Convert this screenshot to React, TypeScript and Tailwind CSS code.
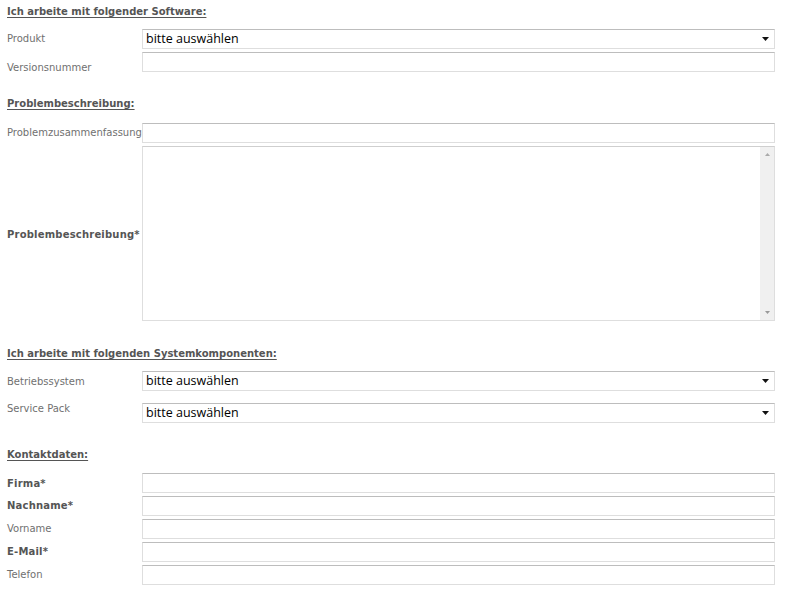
import React from "react";

// Support request form: product, problem, system and contact sections

const labelFont = "[font-family:'DejaVu_Sans',Verdana,sans-serif]";

function SectionTitle({ children, className = "" }: { children: React.ReactNode; className?: string }) {
    return (
        <div
            className={`pl-[7px] text-[10px] leading-[12px] font-bold text-[#555] underline underline-offset-2 ${labelFont} ${className}`}
        >
            {children}
        </div>
    );
}

function Label({ text, bold, pt }: { text: string; bold?: boolean; pt: string }) {
    return (
        <div
            className={`w-[142px] shrink-0 pl-[7px] text-[10px] leading-[12px] ${labelFont} ${pt} ${
                bold ? "font-bold tracking-[0.2px] text-[#555]" : "text-[#707070]"
            }`}
        >
            {text}
        </div>
    );
}

function TextBox() {
    return <div className="h-[20px] flex-1 border border-[#dedede] border-t-[#bdbdbd] bg-white" />;
}

function SelectBox() {
    return (
        <div className="flex h-[20px] flex-1 items-center justify-between border border-[#dedede] border-t-[#bdbdbd] bg-white pl-[3px] pr-[5px]">
            <span className="text-[12.5px] leading-none text-black [font-family:'Open_Sans',sans-serif]">
                bitte auswählen
            </span>
            <svg width="7" height="4" viewBox="0 0 7 4">
                <path d="M0 0h7L3.5 4z" fill="#111" />
            </svg>
        </div>
    );
}

function Row({ label, bold, select, pt }: { label: string; bold?: boolean; select?: boolean; pt: string }) {
    return (
        <div className="flex h-[20px] items-start">
            <Label text={label} bold={bold} pt={pt} />
            {select ? <SelectBox /> : <TextBox />}
        </div>
    );
}

export default function App() {
    return (
        <div className="min-h-[600px] w-[789px] bg-white pt-[6px] pr-[14px]">
            <SectionTitle>Ich arbeite mit folgender Software:</SectionTitle>
            <div className="mt-[11px] flex flex-col gap-[3px]">
                <Row label="Produkt" select pt="pt-[4px]" />
                <Row label="Versionsnummer" pt="pt-[10px]" />
            </div>

            <SectionTitle className="mt-[26px]">Problembeschreibung:</SectionTitle>
            <div className="mt-[13px] flex flex-col gap-[3px]">
                <Row label="Problemzusammenfassung" pt="pt-[4px]" />
                <div className="flex h-[175px] items-center">
                    <div
                        className={`w-[142px] shrink-0 pl-[7px] pt-[2px] text-[10px] leading-[12px] font-bold tracking-[0.2px] text-[#555] ${labelFont}`}
                    >
                        Problembeschreibung*
                    </div>
                    <div className="flex h-full flex-1 border border-[#dedede] border-t-[#cfcfcf] bg-white">
                        <div className="flex-1" />
                        <div className="flex w-[14px] flex-col items-center justify-between bg-[#f0f0f0] py-[6px]">
                            <svg width="5" height="3" viewBox="0 0 5 3">
                                <path d="M0 3h5L2.5 0z" fill="#aaa" />
                            </svg>
                            <svg width="5" height="3" viewBox="0 0 5 3">
                                <path d="M0 0h5L2.5 3z" fill="#999" />
                            </svg>
                        </div>
                    </div>
                </div>
            </div>

            <SectionTitle className="mt-[27px]">Ich arbeite mit folgenden Systemkomponenten:</SectionTitle>
            <div className="mt-[11px] flex flex-col gap-[12px]">
                <Row label="Betriebssystem" select pt="pt-[5px]" />
                <Row label="Service Pack" select pt="pt-0" />
            </div>

            <SectionTitle className="mt-[26px]">Kontaktdaten:</SectionTitle>
            <div className="mt-[12px] flex flex-col gap-[3px]">
                <Row label="Firma*" bold pt="pt-[5px]" />
                <Row label="Nachname*" bold pt="pt-[4px]" />
                <Row label="Vorname" pt="pt-[4px]" />
                <Row label="E-Mail*" bold pt="pt-[4px]" />
                <Row label="Telefon" pt="pt-[4px]" />
            </div>
        </div>
    );
}
